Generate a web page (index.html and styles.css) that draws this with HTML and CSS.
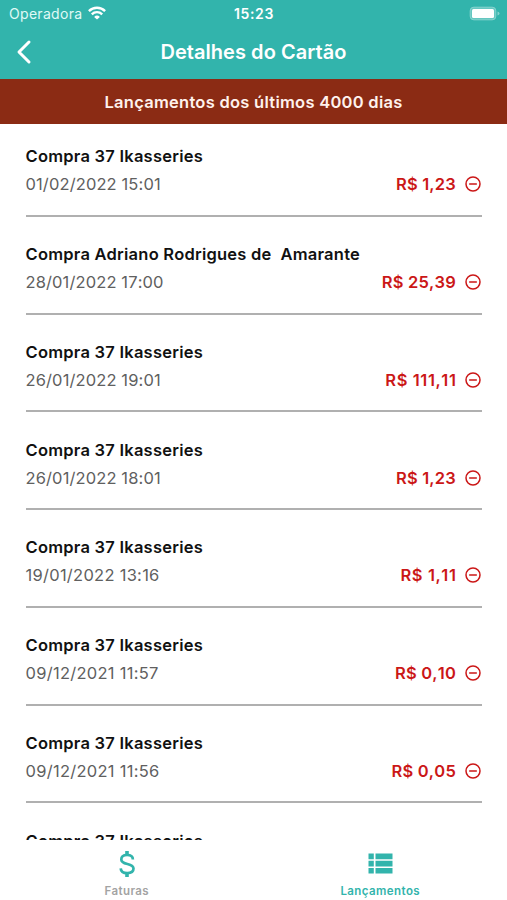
FILE: index.html
```
<!DOCTYPE html>
<html lang="pt-BR">
<head>
<meta charset="utf-8">
<meta name="viewport" content="width=device-width, initial-scale=1">
<title>Detalhes do Cartão</title>
<link rel="stylesheet" href="styles.css">
</head>
<body>
<svg class="defs" aria-hidden="true">
  <symbol id="minus" viewBox="0 0 16 16"><circle cx="8" cy="8" r="7" fill="none" stroke="currentColor" stroke-width="1.5"/><path d="M4.7 8h6.6" stroke="currentColor" stroke-width="1.5" stroke-linecap="round"/></symbol>
</svg>
<div class="app">
  <header class="header">
    <div class="status">
      <div class="carrier"><span class="carrier-name">Operadora</span>
        <svg class="wifi" viewBox="0 0 18 14" fill="none" stroke="currentColor" stroke-width="2.4"><path d="M.9 5.1a11.6 11.6 0 0 1 16.2 0"/><path d="M3.800 8.300a7.400 7.400 0 0 1 10.400 0"/><path d="M9 13.600 6.100 10.900a4.100 4.100 0 0 1 5.800 0z" fill="currentColor" stroke="none"/></svg>
      </div>
      <span class="time">15:23</span>
      <svg class="battery" viewBox="0 0 32 15"><rect x="2" y="1" width="26" height="13" rx="4" fill="#fff" fill-opacity=".25" stroke="#fff" stroke-opacity=".25" stroke-width="1"/><rect x="4" y="3" width="22" height="9" rx="1.500" fill="#fff"/><path d="M29.500 5.500q2 .5 2 2t-2 2z" fill="#fff" fill-opacity=".4"/></svg>
    </div>
    <div class="nav">
      <svg class="back" viewBox="0 0 16 26" fill="none" stroke="currentColor" stroke-width="3" stroke-linecap="round" stroke-linejoin="round"><path d="M13 3 3 13l10 10"/></svg>
      <h1 class="title">Detalhes do Cartão</h1>
    </div>
  </header>
  <div class="banner">Lançamentos dos últimos 4000 dias</div>
  <main class="list">
    <article class="item"><h2 class="name">Compra 37 Ikasseries</h2><div class="row"><time class="date">01/02/2022 15:01</time><span class="amount">R$ 1,23</span><svg class="minus"><use href="#minus"/></svg></div></article>
    <article class="item"><h2 class="name">Compra Adriano Rodrigues de  Amarante</h2><div class="row"><time class="date">28/01/2022 17:00</time><span class="amount">R$ 25,39</span><svg class="minus"><use href="#minus"/></svg></div></article>
    <article class="item"><h2 class="name">Compra 37 Ikasseries</h2><div class="row"><time class="date">26/01/2022 19:01</time><span class="amount spaced">R$ 111,11</span><svg class="minus"><use href="#minus"/></svg></div></article>
    <article class="item"><h2 class="name">Compra 37 Ikasseries</h2><div class="row"><time class="date">26/01/2022 18:01</time><span class="amount">R$ 1,23</span><svg class="minus"><use href="#minus"/></svg></div></article>
    <article class="item"><h2 class="name">Compra 37 Ikasseries</h2><div class="row"><time class="date spaced-date">19/01/2022 13:16</time><span class="amount spaced">R$ 1,11</span><svg class="minus"><use href="#minus"/></svg></div></article>
    <article class="item"><h2 class="name">Compra 37 Ikasseries</h2><div class="row"><time class="date spaced-date">09/12/2021 11:57</time><span class="amount">R$ 0,10</span><svg class="minus"><use href="#minus"/></svg></div></article>
    <article class="item"><h2 class="name">Compra 37 Ikasseries</h2><div class="row"><time class="date spaced-date">09/12/2021 11:56</time><span class="amount">R$ 0,05</span><svg class="minus"><use href="#minus"/></svg></div></article>
    <article class="item"><h2 class="name">Compra 37 Ikasseries</h2></article>
  </main>
  <nav class="tabs">
    <div class="tab"><svg class="tab-icon" viewBox="0 0 28 28"><path d="M14 .9v4M14 22.900v4" stroke="currentColor" stroke-width="3.600"/><path d="M19.900 9.500C19.900 6.500 17.600 5 14.100 5S8.300 6.700 8.300 9.400c0 6.200 12.200 3 12.200 9.200 0 2.900-2.600 4.500-6.300 4.500s-6.300-1.700-6.500-4.800" fill="none" stroke="currentColor" stroke-width="2.700"/></svg><span class="label">Faturas</span></div>
    <div class="tab active"><svg class="tab-icon" viewBox="0 0 28 28"><path d="M2.500 3.500h5.300v5.700H2.500zM9.500 3.500h17v5.700h-17zM2.500 10.700h5.300v5.700H2.500zM9.500 10.700h17v5.700h-17zM2.500 17.900h5.300v5.700H2.500zM9.500 17.900h17v5.700h-17z" fill="currentColor"/></svg><span class="label">Lançamentos</span></div>
  </nav>
</div>
</body>
</html>
```
FILE: styles.css
```
* { box-sizing: border-box; }
body { margin: 0; background: #fff; font-family: Inter, "Liberation Sans", sans-serif; }
.defs { position: absolute; width: 0; height: 0; }
.app { display: flex; flex-direction: column; height: 900px; overflow: hidden; }
.header { height: 79px; flex: none; background: #32b4ac; color: #fff; }
.status { display: grid; grid-template-columns: 1fr auto 1fr; align-items: center; height: 27px; padding: 0 7px 0 9px; }
.carrier { display: flex; align-items: center; gap: 6px; color: #e0faf6; }
.carrier-name { font-size: 14px; letter-spacing: .3px; }
.wifi { width: 18px; height: 14px; margin-top: -2px; color: #fff; }
.time { font-size: 14px; font-weight: 600; letter-spacing: .6px; margin-left: -1px; }
.battery { width: 32px; height: 15px; justify-self: end; margin-top: -1px; }
.nav { display: grid; grid-template-columns: 34px 1fr 34px; align-items: center; height: 50px; }
.back { width: 16px; height: 26px; margin-left: 16px; }
.title { margin: 0; text-align: center; font-size: 20px; font-weight: 600; letter-spacing: .05px; }
.banner { flex: none; height: 45px; line-height: 46px; background: #8b2b14; color: #fff2ed; text-align: center; font-size: 16.500px; font-weight: 600; letter-spacing: .27px; }
.list { flex: 1; min-height: 0; overflow: hidden; padding: 20.250px 25px 0 25.500px; }
.item { height: 72.5px; margin-bottom: 25.25px; border-bottom: 2px solid #b0b0b0; }
.name { margin: 0; font-size: 16.500px; line-height: 24px; font-weight: 600; letter-spacing: .24px; color: #111; white-space: pre; }
.row { display: flex; align-items: center; height: 32px; font-size: 16.500px; font-kerning: none; }
.date { flex: 1; color: #606060; letter-spacing: .12px; }
.spaced-date { letter-spacing: .27px; }
.amount { color: #cb1717; font-weight: 600; letter-spacing: .2px; }
.spaced { letter-spacing: .6px; margin-right: -.5px; }
.minus { width: 16px; height: 16px; margin: 0 1px 0 9px; color: #cb1717; }
.tabs { display: flex; flex: none; height: 60px; background: #fff; }
.tab { flex: 1; display: flex; flex-direction: column; align-items: center; padding-top: 10px; color: #a3a3a3; }
.tab-icon { width: 28px; height: 28px; color: #32b4ac; }
.label { margin-top: 5px; line-height: 16px; font-size: 11.500px; font-weight: 600; letter-spacing: .42px; }
.active { color: #32b4ac; }
```
